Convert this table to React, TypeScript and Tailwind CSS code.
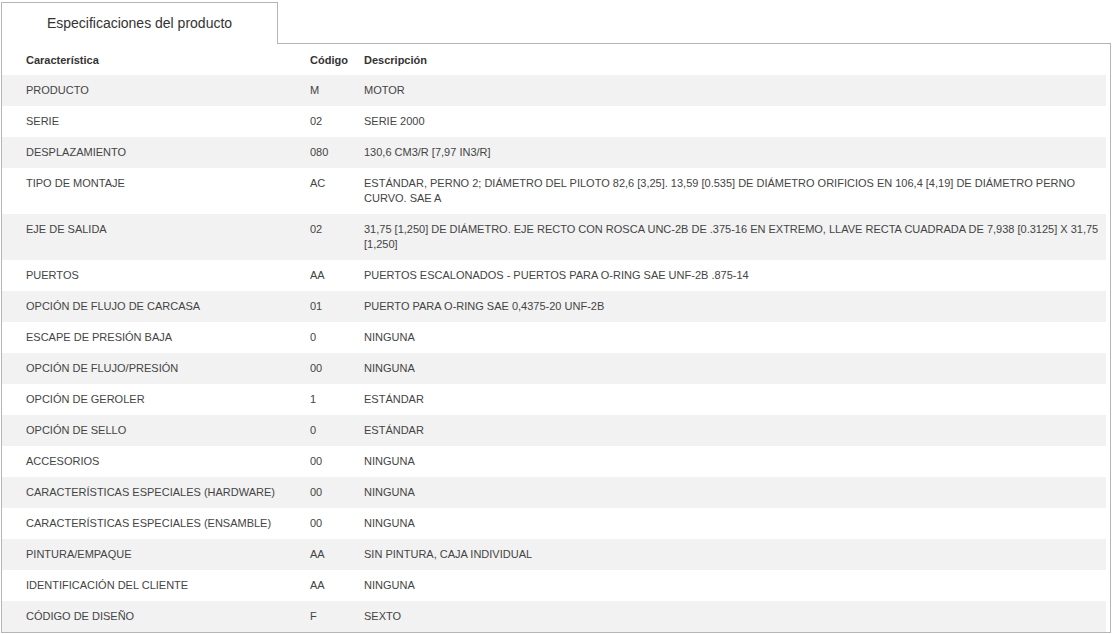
const rows: [string, string, string][] = [
  ['PRODUCTO', 'M', 'MOTOR'],
  ['SERIE', '02', 'SERIE 2000'],
  ['DESPLAZAMIENTO', '080', '130,6 CM3/R [7,97 IN3/R]'],
  [
    'TIPO DE MONTAJE',
    'AC',
    'ESTÁNDAR, PERNO 2; DIÁMETRO DEL PILOTO 82,6 [3,25]. 13,59 [0.535] DE DIÁMETRO ORIFICIOS EN 106,4 [4,19] DE DIÁMETRO PERNO CURVO. SAE A',
  ],
  [
    'EJE DE SALIDA',
    '02',
    '31,75 [1,250] DE DIÁMETRO. EJE RECTO CON ROSCA UNC-2B DE .375-16 EN EXTREMO, LLAVE RECTA CUADRADA DE 7,938 [0.3125] X 31,75 [1,250]',
  ],
  ['PUERTOS', 'AA', 'PUERTOS ESCALONADOS - PUERTOS PARA O-RING SAE UNF-2B .875-14'],
  ['OPCIÓN DE FLUJO DE CARCASA', '01', 'PUERTO PARA O-RING SAE 0,4375-20 UNF-2B'],
  ['ESCAPE DE PRESIÓN BAJA', '0', 'NINGUNA'],
  ['OPCIÓN DE FLUJO/PRESIÓN', '00', 'NINGUNA'],
  ['OPCIÓN DE GEROLER', '1', 'ESTÁNDAR'],
  ['OPCIÓN DE SELLO', '0', 'ESTÁNDAR'],
  ['ACCESORIOS', '00', 'NINGUNA'],
  ['CARACTERÍSTICAS ESPECIALES (HARDWARE)', '00', 'NINGUNA'],
  ['CARACTERÍSTICAS ESPECIALES (ENSAMBLE)', '00', 'NINGUNA'],
  ['PINTURA/EMPAQUE', 'AA', 'SIN PINTURA, CAJA INDIVIDUAL'],
  ['IDENTIFICACIÓN DEL CLIENTE', 'AA', 'NINGUNA'],
  ['CÓDIGO DE DISEÑO', 'F', 'SEXTO'],
]

export default function App() {
  return (
    <div className="min-h-screen bg-white font-['Liberation_Sans',Arial,sans-serif] text-[#444]">
      <div className="mx-[1px]">
        {/* pestaña */}
        <div className="flex">
          <div className="relative z-10 -mb-px mt-[2px] flex h-[42px] w-[277px] items-center justify-center border border-b-0 border-[#b5b5b5] bg-white text-[14px] text-[#333]">
            Especificaciones del producto
          </div>
        </div>

        <div className="border border-[#b5b5b5] pr-[4px]">
          <table className="w-full border-collapse text-left text-[11px] leading-[15px]">
            <colgroup>
              <col className="w-[300px]" />
              <col className="w-[54px]" />
              <col />
            </colgroup>
            <thead>
              <tr className="h-[31px]">
                <th className="pt-[9px] pb-[7px] pl-6 pr-2 font-bold text-[#333]">Característica</th>
                <th className="px-2 pt-[9px] pb-[7px] font-bold text-[#333]">Código</th>
                <th className="pt-[9px] pb-[7px] pl-2 pr-1 font-bold text-[#333]">Descripción</th>
              </tr>
            </thead>
            <tbody>
              {rows.map(([name, code, desc], i) => (
                <tr key={name} className={i % 2 === 0 ? 'bg-[#f2f2f2]' : 'bg-white'}>
                  <td className="py-2 pl-6 pr-2 align-top">{name}</td>
                  <td className="px-2 py-2 align-top">{code}</td>
                  <td className="py-2 pl-2 pr-1 align-top">{desc}</td>
                </tr>
              ))}
            </tbody>
          </table>
        </div>
      </div>
    </div>
  )
}
